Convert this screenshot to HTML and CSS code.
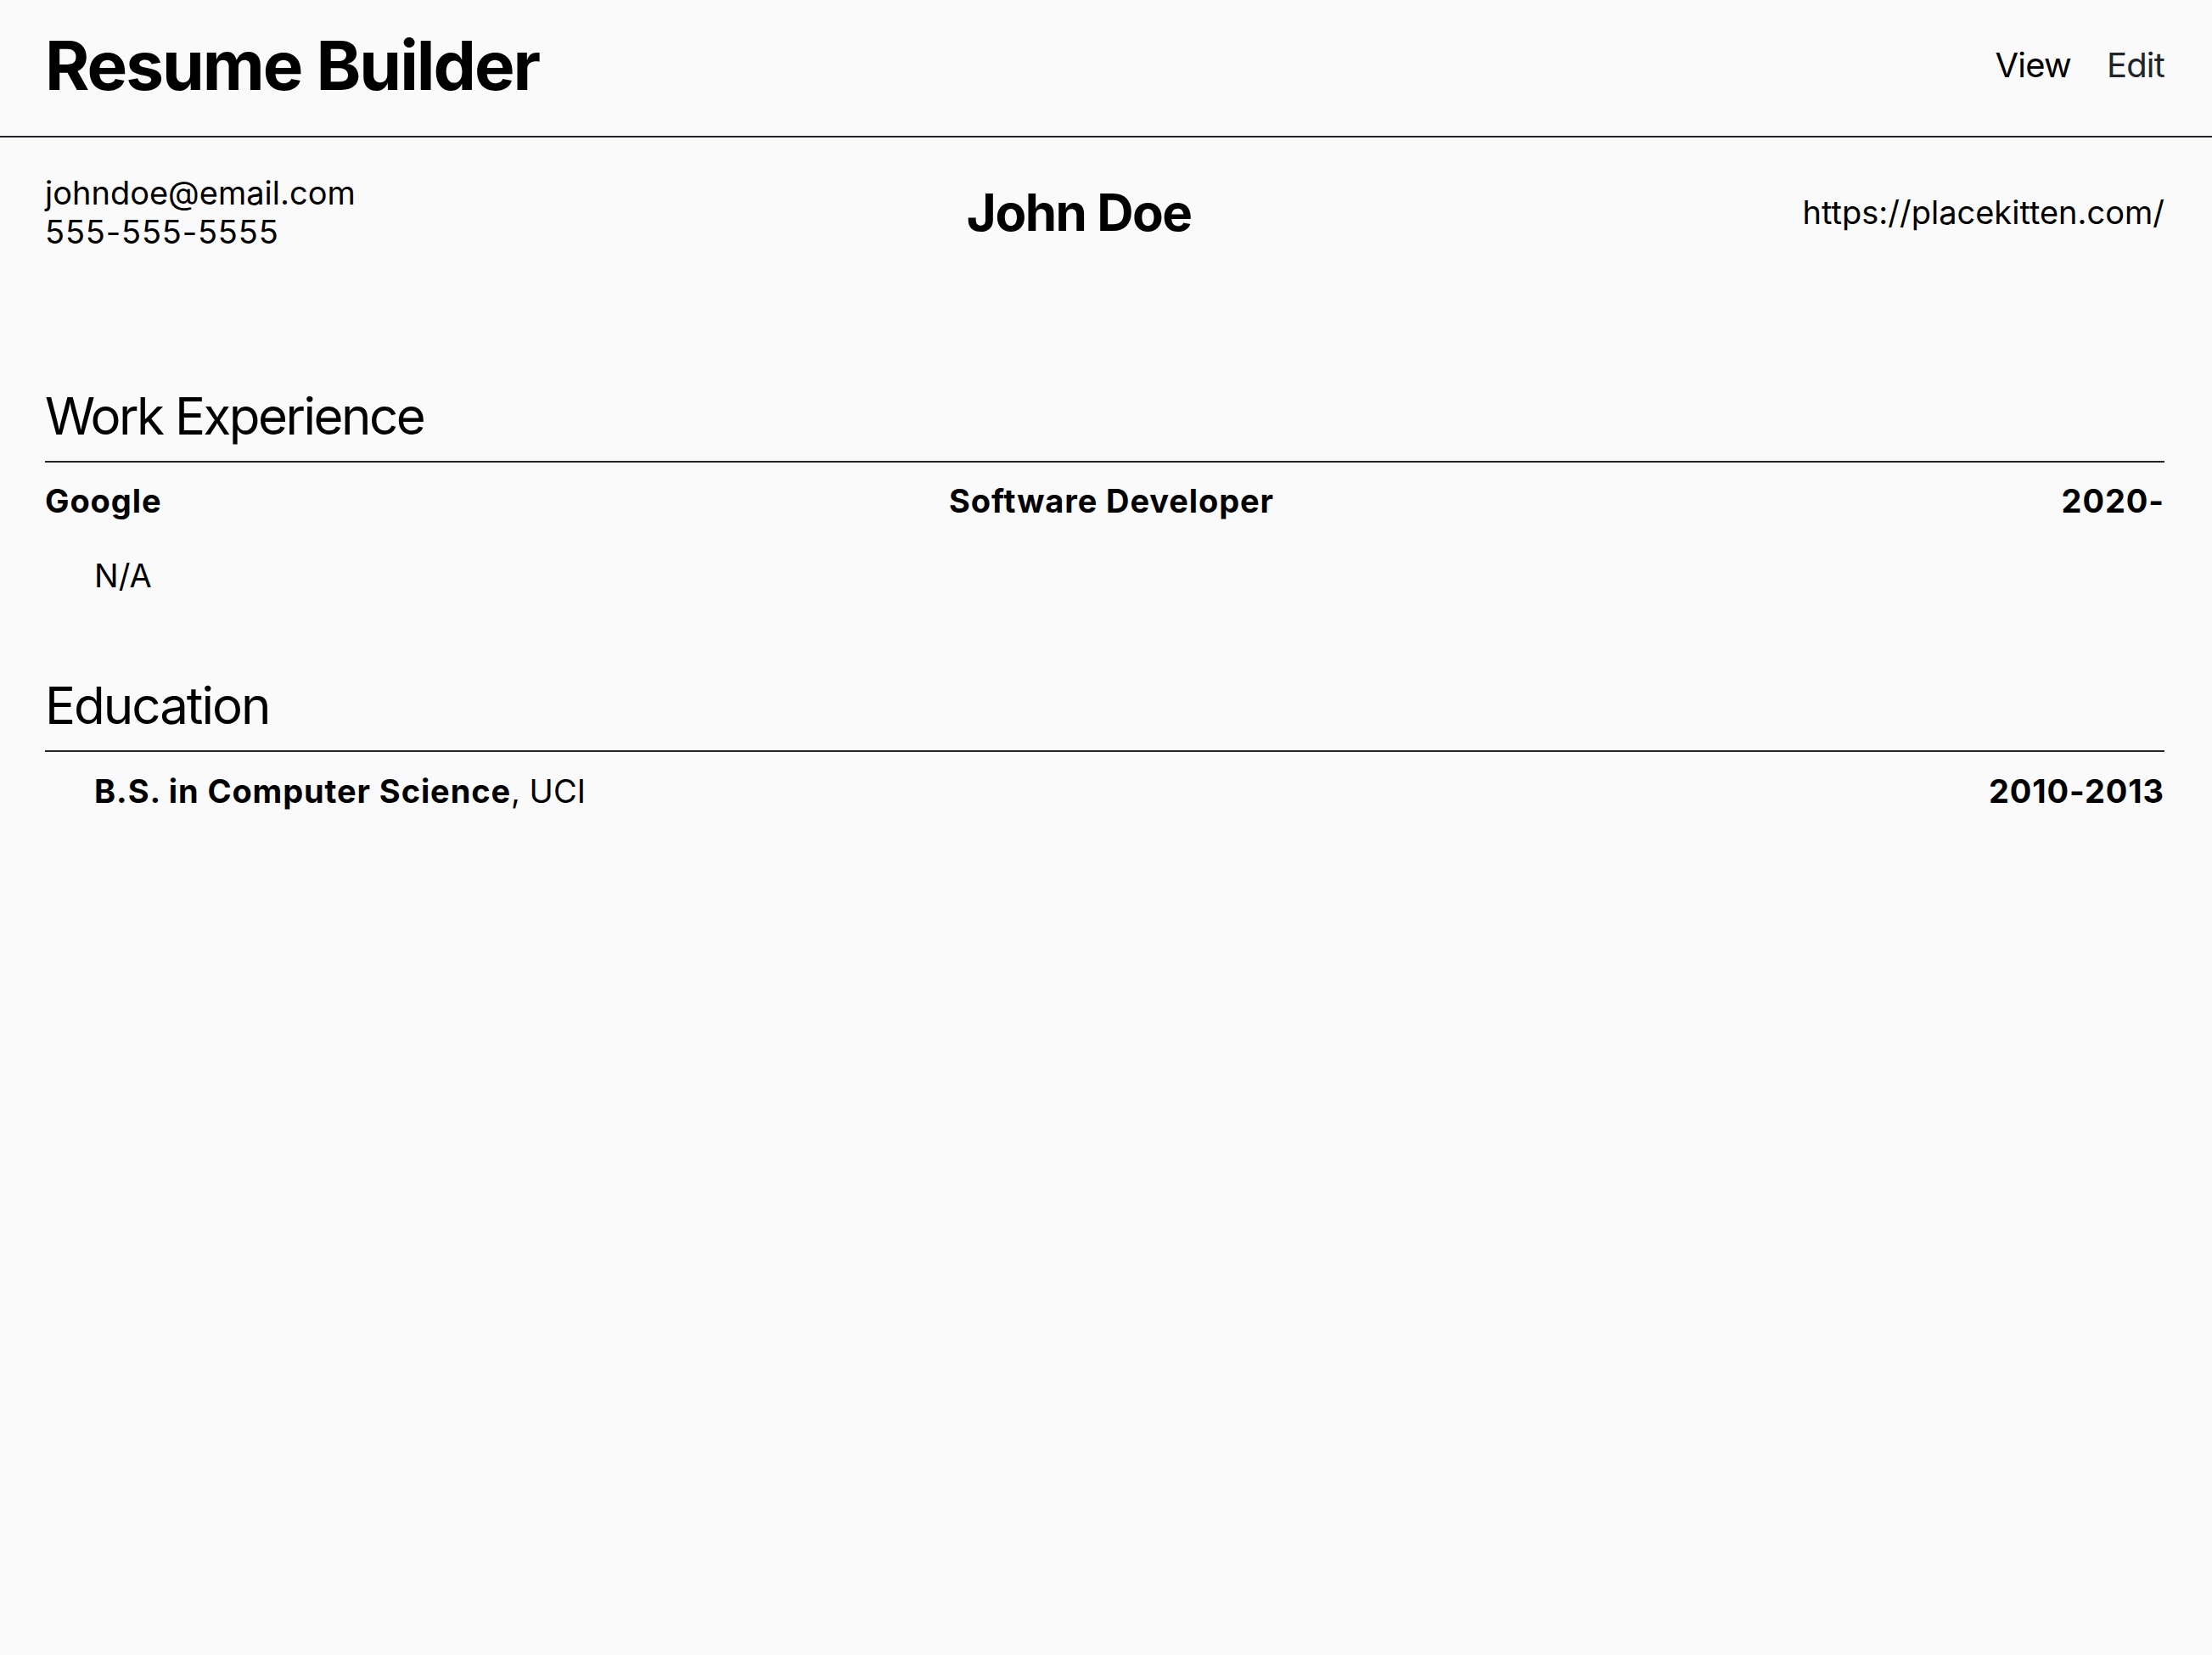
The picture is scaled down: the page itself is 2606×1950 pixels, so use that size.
FILE: index.html
```html
<!DOCTYPE html>
<html lang="en">
<head>
<meta charset="utf-8">
<title>Resume Builder</title>
<link rel="stylesheet" href="styles.css">
</head>
<body>
<header class="topbar">
  <h1 class="brand">Resume Builder</h1>
  <nav class="nav">
    <a class="nav-link active" href="#">View</a>
    <a class="nav-link" href="#">Edit</a>
  </nav>
</header>
<main class="resume">
  <section class="contact">
    <div class="contact-left">
      <div>johndoe@email.com</div>
      <div class="phone">555-555-5555</div>
    </div>
    <h2 class="name">John Doe</h2>
    <div class="contact-right">https://placekitten.com/</div>
  </section>

  <section class="section work">
    <h3 class="section-title">Work Experience</h3>
    <div class="job-row">
      <span class="bold">Google</span>
      <span class="bold">Software Developer</span>
      <span class="bold">2020-</span>
    </div>
    <ul class="details">
      <li>N/A</li>
    </ul>
  </section>

  <section class="section education">
    <h3 class="section-title edu-title">Education</h3>
    <div class="edu-row">
      <span><span class="bold">B.S. in Computer Science</span>, UCI</span>
      <span class="bold">2010-2013</span>
    </div>
  </section>
</main>
</body>
</html>
```

FILE: styles.css
```css
* { box-sizing: border-box; }

html, body {
  margin: 0;
  padding: 0;
  background: #fafafa;
}

body {
  font-family: Inter, "Noto Sans", "Liberation Sans", sans-serif;
  color: #000;
  min-height: 1950px;
}

.topbar {
  display: flex;
  justify-content: space-between;
  align-items: center;
  height: 162px;
  padding: 28px 56px 35px 53px;
  border-bottom: 2px solid #212529;
}

.brand {
  margin: 0;
  font-size: 80px;
  font-weight: 700;
  letter-spacing: -2px;
  line-height: normal;
}

.nav {
  display: flex;
  gap: 42px;
}

.nav-link {
  font-size: 40px;
  letter-spacing: -0.8px;
  color: #212529;
  text-decoration: none;
}

.nav-link.active {
  color: #000;
}

.resume {
  padding: 0 56px 0 53px;
}

.contact {
  display: flex;
  justify-content: space-between;
  align-items: center;
  margin-top: 42px;
  font-size: 38px;
  line-height: 46px;
}

.phone {
  letter-spacing: 0.8px;
}

.name {
  margin: 0;
  font-size: 60px;
  font-weight: 700;
  letter-spacing: -1.5px;
  line-height: normal;
}

.section-title {
  margin: 0;
  font-size: 60px;
  font-weight: 400;
  letter-spacing: -2.5px;
  line-height: normal;
  padding-bottom: 17px;
  border-bottom: 2px solid #212529;
}

.edu-title {
  letter-spacing: -2px;
}

.work {
  margin-top: 158px;
}

.education {
  margin-top: 94px;
}

.job-row,
.edu-row {
  display: flex;
  justify-content: space-between;
  font-size: 38px;
  line-height: 46px;
}

.job-row {
  margin-top: 22px;
}

.edu-row {
  margin-top: 23px;
  padding-left: 58px;
}

.bold {
  font-weight: 700;
  letter-spacing: 0.9px;
}

.details {
  list-style: none;
  margin: 42px 0 0 0;
  padding-left: 58px;
  font-size: 38px;
  line-height: 46px;
}
```
